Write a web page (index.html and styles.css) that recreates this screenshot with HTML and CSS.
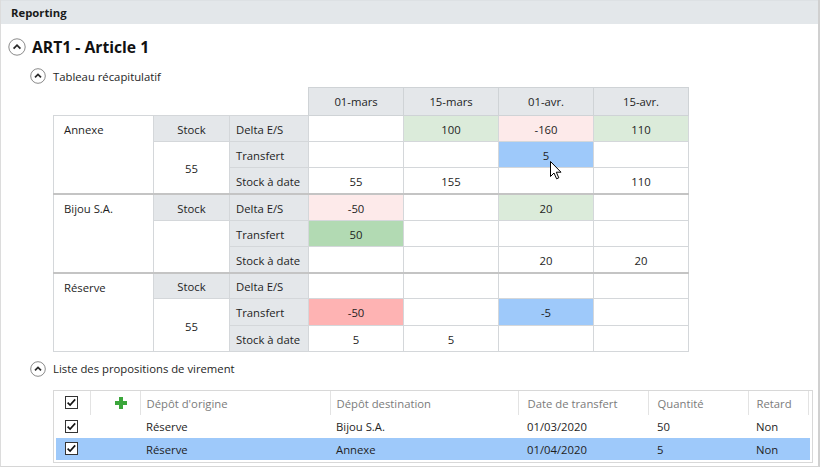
FILE: index.html
```html
<!DOCTYPE html>
<html lang="fr">
<head>
<meta charset="utf-8">
<title>Reporting</title>
<link rel="stylesheet" href="styles.css">
</head>
<body>
<div class="panel">
  <div class="panel-header">Reporting</div>
  <div class="content">
    <div class="title-row">
      <svg class="ico-big" width="18" height="18" viewBox="0 0 18 18"><circle cx="9" cy="9" r="8.2" fill="#fff" stroke="#8a8a8a" stroke-width="1"/><polyline points="5.6,10.6 9,7.2 12.4,10.6" fill="none" stroke="#2a2a2a" stroke-width="1.8"/></svg>
      <span class="title">ART1 - Article 1</span>
    </div>
    <div class="sub-row first">
      <svg width="16" height="16" viewBox="0 0 16 16"><circle cx="8" cy="8" r="7.3" fill="#fff" stroke="#8a8a8a" stroke-width="1"/><polyline points="5,9.4 8,6.4 11,9.4" fill="none" stroke="#2a2a2a" stroke-width="1.7"/></svg>
      <span>Tableau récapitulatif</span>
    </div>

    <table class="recap">
      <colgroup>
        <col class="c-name"><col class="c-stock"><col class="c-lbl">
        <col class="c-val"><col class="c-val"><col class="c-val"><col class="c-val">
      </colgroup>
      <thead>
        <tr><th class="blank" colspan="3"></th><th>01-mars</th><th>15-mars</th><th>01-avr.</th><th>15-avr.</th></tr>
      </thead>
      <tbody>
        <tr><td class="name" rowspan="3">Annexe</td><td class="stk-h">Stock</td><td class="lbl">Delta E/S</td><td></td><td class="lg">100</td><td class="lr">-160</td><td class="lg">110</td></tr>
        <tr><td class="stk" rowspan="2">55</td><td class="lbl">Transfert</td><td></td><td></td><td class="bl">5</td><td></td></tr>
        <tr><td class="lbl">Stock à date</td><td>55</td><td>155</td><td></td><td>110</td></tr>
      </tbody>
      <tbody>
        <tr><td class="name" rowspan="3">Bijou S.A.</td><td class="stk-h">Stock</td><td class="lbl">Delta E/S</td><td class="lr">-50</td><td></td><td class="lg">20</td><td></td></tr>
        <tr><td class="stk" rowspan="2"></td><td class="lbl">Transfert</td><td class="mg">50</td><td></td><td></td><td></td></tr>
        <tr><td class="lbl">Stock à date</td><td></td><td></td><td>20</td><td>20</td></tr>
      </tbody>
      <tbody>
        <tr><td class="name" rowspan="3">Réserve</td><td class="stk-h">Stock</td><td class="lbl">Delta E/S</td><td></td><td></td><td></td><td></td></tr>
        <tr><td class="stk" rowspan="2">55</td><td class="lbl">Transfert</td><td class="mr">-50</td><td></td><td class="bl">-5</td><td></td></tr>
        <tr><td class="lbl">Stock à date</td><td>5</td><td>5</td><td></td><td></td></tr>
      </tbody>
    </table>

    <div class="sub-row second">
      <svg width="16" height="16" viewBox="0 0 16 16"><circle cx="8" cy="8" r="7.3" fill="#fff" stroke="#8a8a8a" stroke-width="1"/><polyline points="5,9.4 8,6.4 11,9.4" fill="none" stroke="#2a2a2a" stroke-width="1.7"/></svg>
      <span>Liste des propositions de virement</span>
    </div>

    <div class="grid">
      <table class="list">
        <colgroup>
          <col class="g-chk"><col class="g-add"><col class="g-orig"><col class="g-dest"><col class="g-date"><col class="g-qty"><col class="g-ret"><col>
        </colgroup>
        <thead>
          <tr>
            <th class="chk"><svg width="13" height="13" viewBox="0 0 13 13"><rect x="0.5" y="0.5" width="12" height="12" fill="#fff" stroke="#333"/><path d="M2.6 6.6 L5.1 9.1 L10.2 3.4" fill="none" stroke="#111" stroke-width="1.6"/></svg></th>
            <th class="add"><svg width="12" height="12" viewBox="0 0 12 12"><rect x="4" y="0" width="4" height="12" fill="#3ba63b"/><rect x="0" y="4" width="12" height="4" fill="#3ba63b"/></svg></th>
            <th class="p6">Dépôt d'origine</th>
            <th class="p6">Dépôt destination</th>
            <th class="p9">Date de transfert</th>
            <th class="p9">Quantité</th>
            <th class="p8">Retard</th>
            <th class="last"></th>
          </tr>
        </thead>
        <tbody>
          <tr>
            <td class="chk"><svg width="13" height="13" viewBox="0 0 13 13"><rect x="0.5" y="0.5" width="12" height="12" fill="#fff" stroke="#333"/><path d="M2.6 6.6 L5.1 9.1 L10.2 3.4" fill="none" stroke="#111" stroke-width="1.6"/></svg></td>
            <td></td>
            <td class="p6">Réserve</td>
            <td class="p6">Bijou S.A.</td>
            <td class="p9">01/03/2020</td>
            <td class="p9">50</td>
            <td class="p8">Non</td>
            <td></td>
          </tr>
          <tr class="sel">
            <td class="chk"><svg width="13" height="13" viewBox="0 0 13 13"><rect x="0.5" y="0.5" width="12" height="12" fill="#fff" stroke="#333"/><path d="M2.6 6.6 L5.1 9.1 L10.2 3.4" fill="none" stroke="#111" stroke-width="1.6"/></svg></td>
            <td></td>
            <td class="p6">Réserve</td>
            <td class="p6">Annexe</td>
            <td class="p9">01/04/2020</td>
            <td class="p9">5</td>
            <td class="p8">Non</td>
            <td></td>
          </tr>
        </tbody>
      </table>
    </div>
  </div>
  <svg class="cursor" width="12" height="19" viewBox="0 0 12 19"><path d="M0.5 0.5 V15.5 L4 12 L6.6 17.8 L8.8 16.8 L6.3 11.2 H11 Z" fill="#fff" stroke="#000" stroke-width="1" stroke-linejoin="round"/></svg>
</div>
</body>
</html>
```
FILE: styles.css
```css
* { box-sizing: border-box; }

html, body {
  margin: 0;
  padding: 0;
  background: #fff;
}

body {
  font-family: "Open Sans", "Noto Sans", "Liberation Sans", sans-serif;
  font-size: 11.3px;
  color: #1e1e1e;
}

.panel {
  position: relative;
  width: 820px;
  height: 467px;
  border-left: 1px solid #dcdcdc;
  border-right: 2px solid #d0d0d0;
  border-bottom: 1px solid #d6d6d6;
  overflow: hidden;
}

.panel-header {
  height: 24px;
  background: #e3e7ea;
  border-top: 1px solid #dde1e4;
  padding-left: 10px;
  font-weight: 700;
  font-size: 11.3px;
  line-height: 23px;
  color: #1a1a1a;
}

.content {
  padding-left: 7px;
}

.title-row {
  display: flex;
  align-items: center;
  gap: 6px;
  height: 18px;
  margin-top: 14px;
}

.title {
  font-size: 15.7px;
  font-weight: 700;
  color: #111;
}

.sub-row {
  display: flex;
  align-items: center;
  gap: 7px;
  height: 16px;
  margin-left: 22px;
}

.sub-row.first { margin-top: 12px; }
.sub-row.second { margin-top: 9px; }

/* Summary table */
.recap {
  margin-left: 45px;
  margin-top: 3px;
  border-collapse: collapse;
  table-layout: fixed;
  width: 635px;
}

.c-name { width: 100px; }
.c-stock { width: 76px; }
.c-lbl { width: 79px; }
.c-val { width: 95px; }

.recap th,
.recap td {
  border: 1px solid #d4d7da;
  padding: 0 6px;
  font-weight: 400;
  text-align: center;
  white-space: nowrap;
}

.recap th {
  height: 28px;
  background: #e4e7ea;
  border-color: #cfd3d6;
}

.recap th.blank {
  background: transparent;
  border: none;
}

.recap td {
  height: 26.2px;
  padding-top: 2px;
}

.recap tbody + tbody tr:first-child td {
  border-top: 2px solid #c4c4c4;
}

.recap td.name {
  text-align: left;
  vertical-align: top;
  padding: 6px 10px 0;
}

.recap td.stk-h,
.recap td.lbl {
  background: #e4e7ea;
}

.recap td.lbl {
  text-align: left;
}

.recap td.stk {
  background: #fff;
}

.lg { background: #dbebda; }
.lr { background: #fdeaea; }
.bl { background: #9ec9fa; }
.mg { background: #b2dab3; }
.mr { background: #feb3b3; }

/* Transfer list */
.grid {
  margin-left: 45px;
  margin-top: 13px;
  width: 760px;
  border: 1px solid #d8d8d8;
  padding: 0 2px 2px 2px;
}

.list {
  width: 100%;
  border-collapse: collapse;
  table-layout: fixed;
}

.g-chk { width: 34px; }
.g-add { width: 50px; }
.g-orig { width: 190px; }
.g-dest { width: 188px; }
.g-date { width: 130px; }
.g-qty { width: 100px; }
.g-ret { width: 60px; }

.list th {
  height: 24px;
  font-weight: 400;
  color: #7b7b7b;
  text-align: left;
  border-right: 1px solid #e3e3e3;
  padding: 1px 0 0;
}

.list th.last { border-right: none; }

.list td {
  height: 23px;
  padding: 1px 0 0;
  white-space: nowrap;
}

.list tr.sel td {
  height: 22px;
  background: #9ec9fa;
}

.list .chk {
  padding: 0 0 0 9px;
  line-height: 0;
}

.list .chk svg { display: block; }

.list th.add {
  padding: 0 0 0 24px;
  line-height: 0;
}

.list th.add svg { display: block; }

.list .p6 { padding-left: 6px; }
.list .p8 { padding-left: 8px; }
.list .p9 { padding-left: 9px; }

.cursor {
  position: absolute;
  left: 549px;
  top: 161px;
}
```
